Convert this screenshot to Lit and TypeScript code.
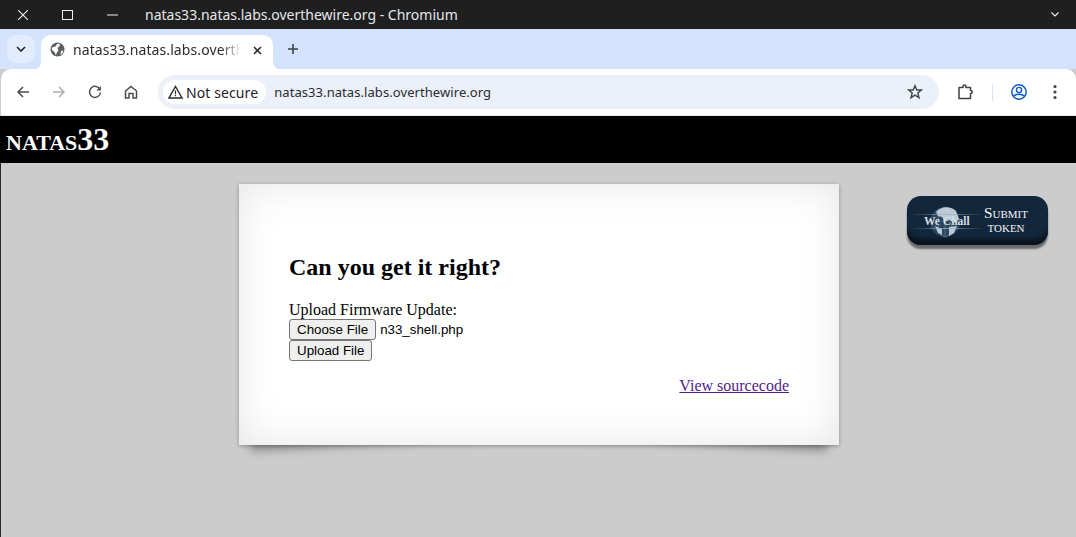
import { LitElement, html, css, svg } from "lit";
import { customElement } from "lit/decorators.js";

const ic = (w: number, h: number, body: unknown) =>
  html`<svg width=${w} height=${h} viewBox="0 0 ${w} ${h}" fill="none">${body}</svg>`;

@customElement("app-root")
export class AppRoot extends LitElement {
  static styles = css`
    :host { display: block; width: 1076px; height: 537px; overflow: hidden; position: relative; background: #ccc; }
    .ui { font-family: "Noto Sans", sans-serif; }
    .titlebar { height: 29px; background: #1f1f1f; display: flex; align-items: center; color: #e6e6e6; }
    .wc { display: flex; align-items: center; gap: 34px; padding-left: 18px; width: 145px; box-sizing: border-box; }
    .wc svg, .titlebar svg { display: block; }
    .title { flex: 1; font-size: 14px; color: #e3e8ee; }
    .chev { margin-right: 17px; }
    .tabstrip { height: 40px; background: #d3e3fd; display: flex; position: relative; }
    .tabmenu { width: 28px; height: 28px; border-radius: 9px; margin: 6px 0 0 7px; background: #e3ecfc; display: flex; align-items: center; justify-content: center; }
    .tab { width: 232px; height: 35px; margin: 6px 0 0 6px; background: #fff; border-radius: 10px 10px 0 0; display: flex; align-items: center; padding: 0 0 7px 9px; box-sizing: border-box; position: relative; font-size: 14px; color: #2a2c30; }
    .tab .name { margin-left: 8px; width: 168px; overflow: hidden; white-space: nowrap; letter-spacing: 0.1px;
      -webkit-mask-image: linear-gradient(90deg, #000 88%, transparent 100%); mask-image: linear-gradient(90deg, #000 88%, transparent 100%); }
    .tab .x { margin-left: 12px; }
    .tab::before, .tab::after { content: ""; position: absolute; bottom: 0; width: 8px; height: 8px; }
    .tab::before { left: -8px; background: radial-gradient(circle at 0 0, transparent 7.5px, #fff 8px); }
    .tab::after { right: -8px; background: radial-gradient(circle at 100% 0, transparent 7.5px, #fff 8px); }
    .plus { margin: 9px 0 0 14px; }
    .toolbar { height: 46px; background: #fff; display: flex; align-items: center; padding-left: 14px; box-sizing: border-box; border-radius: 10px 10px 0 0; margin-left: 1px; position: relative; }
    .tools { display: flex; gap: 20px; align-items: center; }
    .tools svg { display: block; }
    .omni { margin-left: 19px; width: 781px; height: 34px; background: #ebf0f9; border-radius: 17px; display: flex; align-items: center; box-sizing: border-box; padding-left: 5px; position: relative; }
    .chip { height: 24px; background: #fff; border-radius: 12px; display: flex; align-items: center; padding: 0 8px 0 5px; font-size: 14px; color: #1f2329; gap: 3px; letter-spacing: 0.1px; }
    .url { margin-left: 8px; font-size: 13px; color: #2a2d32; letter-spacing: 0.07px; flex: 1; }
    .star { margin-right: 16px; display: block; }
    .right { display: flex; align-items: center; margin-left: 18px; }
    .right svg { display: block; }
    .sep { width: 1px; height: 17px; background: #d3e3fd; margin: 0 17px 0 17px; }
    .kebab { margin-left: 25px; }
    .rule { height: 1px; background: #e8e8e8; margin-left: 1px; }

    .page { border-left: 1px solid #2a2a2a; height: 421px; background: #ccc; font-family: "Liberation Serif", serif; color: #000; box-sizing: border-box; position: relative; }
    .banner { height: 47px; background: #000; color: #fff; font-weight: bold; padding-left: 6px; margin-left: -1px; box-sizing: border-box; display: flex; align-items: baseline; line-height: 47px; font-size: 32px; }
    .banner .nm { font-variant: small-caps; }
    .stack { position: relative; z-index: 0; }
    .card { width: 600px; height: 261px; margin: 21px 0 0 238px; background: #fff; box-sizing: border-box; padding: 50px 50px 0; position: relative;
      box-shadow: inset 0 0 40px rgba(0,0,0,0.1), 0 1px 4px rgba(0,0,0,0.3); font-size: 16px; }
    .card::before, .card::after { content: ""; position: absolute; z-index: -1; bottom: 17px; top: 80%; width: 50%; background: #888; box-shadow: 0 15px 10px #888; }
    .card::before { left: 10px; transform: rotate(-3deg); }
    .card::after { right: 10px; transform: rotate(3deg); }
    h2 { margin: 19px 0 20px; font-size: 24px; line-height: 28px; font-weight: bold; }
    .label { line-height: 18px; }
    .filerow { display: flex; align-items: center; height: 21px; }
    button { font: 13.333px "Liberation Sans", sans-serif; height: 21px; padding: 0 7px; box-sizing: border-box; background: #efefef; border: 1px solid #767676; border-radius: 3px; color: #000; display: block; }
    .fname { font: 13.333px "Liberation Sans", sans-serif; margin-left: 4px; }
    .src { text-align: right; margin-top: 16px; line-height: 18px; }
    .src a { color: #551a8b; text-decoration: underline; }

    .token { position: absolute; left: 906px; top: 80px; width: 141px; height: 49px; border-radius: 14px; background: #13273c; box-shadow: inset 0 -9px 4px -3px #08141e, 0 4px 2px #6b6b6b; overflow: hidden; display: flex; color: #f2f5f8; }
    .logo { width: 80px; position: relative; }
    .logo svg { position: absolute; left: 0; top: 0; }
    .wech { position: absolute; left: 17px; top: 19px; font-size: 11.5px; font-weight: bold; color: #d5dce4; white-space: nowrap; }
    .sub { flex: 1; text-align: center; padding: 9px 20px 0 0; line-height: 15px; font-weight: normal; }
    .s1 { font-size: 15.3px; font-variant: small-caps; display: block; }
    .s2 { font-size: 15px; font-variant: small-caps; display: block; text-transform: lowercase; }
  `;

  render() {
    return html`
      <div class="ui">
        <div class="titlebar">
          <div class="wc">
            ${ic(10, 10, svg`<path d="M0 0L10 10M10 0L0 10" stroke="#eee" stroke-width="1.1"/>`)}
            ${ic(11, 10, svg`<rect x=".5" y=".5" width="10" height="9" stroke="#eee"/>`)}
            ${ic(11, 10, svg`<path d="M0 5H11" stroke="#eee"/>`)}
          </div>
          <div class="title">natas33.natas.labs.overthewire.org - Chromium</div>
          <div class="chev">${ic(8, 5, svg`<path d="M.5 .5L4 4L7.5 .5" stroke="#eee" stroke-width="1.2"/>`)}</div>
        </div>
        <div class="tabstrip">
          <div class="tabmenu">${ic(10, 6, svg`<path d="M1 1L5 5L9 1" stroke="#1f2329" stroke-width="1.6"/>`)}</div>
          <div class="tab">
            ${ic(15, 15, svg`<circle cx="7.5" cy="7.5" r="7" fill="#5b5e63"/><path d="M2 5.5L5.5 4.5L7 2L9.5 1.5L10 3.5L7.5 6L8.5 8.5L6.5 11L6 13.5L4.5 10L2 8Z M11 9L13.5 8.5L12 12L10.5 12.5Z" fill="#fff"/>`)}
            <span class="name">natas33.natas.labs.overthewire.org</span>
            <span class="x">${ic(9, 9, svg`<path d="M1 1L8 8M8 1L1 8" stroke="#2a2c30" stroke-width="1.6"/>`)}</span>
          </div>
          <div class="plus">${ic(12, 12, svg`<path d="M6 1V11M1 6H11" stroke="#3c4043" stroke-width="1.6"/>`)}</div>
        </div>
        <div class="toolbar">
          <div class="tools">
            ${ic(16, 16, svg`<path d="M14 8H3M8 3L3 8L8 13" stroke="#4a4d51" stroke-width="1.5"/>`)}
            ${ic(16, 16, svg`<path d="M2 8H13M8 3L13 8L8 13" stroke="#aeb0b3" stroke-width="1.5"/>`)}
            ${ic(16, 16, svg`<path d="M13 5.5A5.5 5.5 0 1 0 13.5 8.5" stroke="#4a4d51" stroke-width="1.5"/><path d="M13.8 2V6.5H9.3Z" fill="#4a4d51"/>`)}
            ${ic(16, 16, svg`<path d="M2.5 7L8 2.5L13.5 7V14H10V9.5H6V14H2.5Z" stroke="#4a4d51" stroke-width="1.5"/>`)}
          </div>
          <div class="omni">
            <div class="chip">
              ${ic(15, 14, svg`<path d="M7.5 1.5L14 13H1Z" stroke="#2a2c30" stroke-width="1.4"/><path d="M7.5 5.5V9.2M7.5 10V11.3" stroke="#2a2c30" stroke-width="1.2"/>`)}
              <span>Not secure</span>
            </div>
            <div class="url">natas33.natas.labs.overthewire.org</div>
            <svg class="star" width="16" height="16" viewBox="0 0 16 16" fill="none"><path d="M8 1.8L9.8 6H14.4L10.8 9L12 13.8L8 11.2L4 13.8L5.2 9L1.6 6H6.2Z" stroke="#3f4246" stroke-width="1.4"/></svg>
          </div>
          <div class="right">
            ${ic(18, 16, svg`<path d="M2 3.5H6V2.2C6 .6 9 .6 9 2.2V3.5H13.5V6.5C15.8 6.5 15.8 9.5 13.5 9.5V14.5H2V3.5Z" stroke="#3f4246" stroke-width="1.5" stroke-linejoin="round"/>`)}
            <div class="sep"></div>
            ${ic(18, 18, svg`<circle cx="9" cy="9" r="7.2" stroke="#0b57d0" stroke-width="1.5"/><circle cx="9" cy="7" r="2.6" stroke="#0b57d0" stroke-width="1.4"/><path d="M3.8 13C6 10.6 12 10.6 14.2 13" stroke="#0b57d0" stroke-width="1.4"/>`)}
            <span class="kebab">${ic(4, 16, svg`<circle cx="2" cy="2.5" r="1.6" fill="#3f4246"/><circle cx="2" cy="8" r="1.6" fill="#3f4246"/><circle cx="2" cy="13.5" r="1.6" fill="#3f4246"/>`)}</span>
          </div>
        </div>
        <div class="rule"></div>
      </div>
      <div class="page">
        <div class="banner"><span class="nm">natas</span><span>33</span></div>
        <div class="stack">
          <div class="card">
            <h2>Can you get it right?</h2>
            <div class="label">Upload Firmware Update:</div>
            <div class="filerow"><button>Choose File</button><span class="fname">n33_shell.php</span></div>
            <button>Upload File</button>
            <div class="src"><a href="#">View sourcecode</a></div>
          </div>
        </div>
        <div class="token">
          <div class="logo">
            ${ic(80, 50, svg`
              <defs><linearGradient id="st"><stop offset="0" stop-color="#7f97ad" stop-opacity="0"/><stop offset=".5" stop-color="#9fb3c6" stop-opacity=".8"/><stop offset="1" stop-color="#7f97ad" stop-opacity="0"/></linearGradient></defs>
              <circle cx="38" cy="26" r="15" fill="#2d475f"/>
              <g stroke="#8ea2b6" stroke-width=".6" opacity=".7"><ellipse cx="38" cy="26" rx="7" ry="15"/><path d="M38 11V41"/></g>
              <path d="M29 16C34 10 44 10 49 15L52 23L48 27L42 24L38 26L35 21L31 20Z M42 31L50 30L47 37L42 40Z M28 30L35 33L35 39L31 37Z" fill="#bccad7"/>
              <rect x="3" y="18" width="74" height="1" fill="url(#st)"/>
              <rect x="3" y="32" width="74" height="1" fill="url(#st)"/>
            `)}
            <span class="wech">We Chall</span>
          </div>
          <div class="sub"><span class="s1">Submit</span><span class="s2">TOKEN</span></div>
        </div>
      </div>
    `;
  }
}
